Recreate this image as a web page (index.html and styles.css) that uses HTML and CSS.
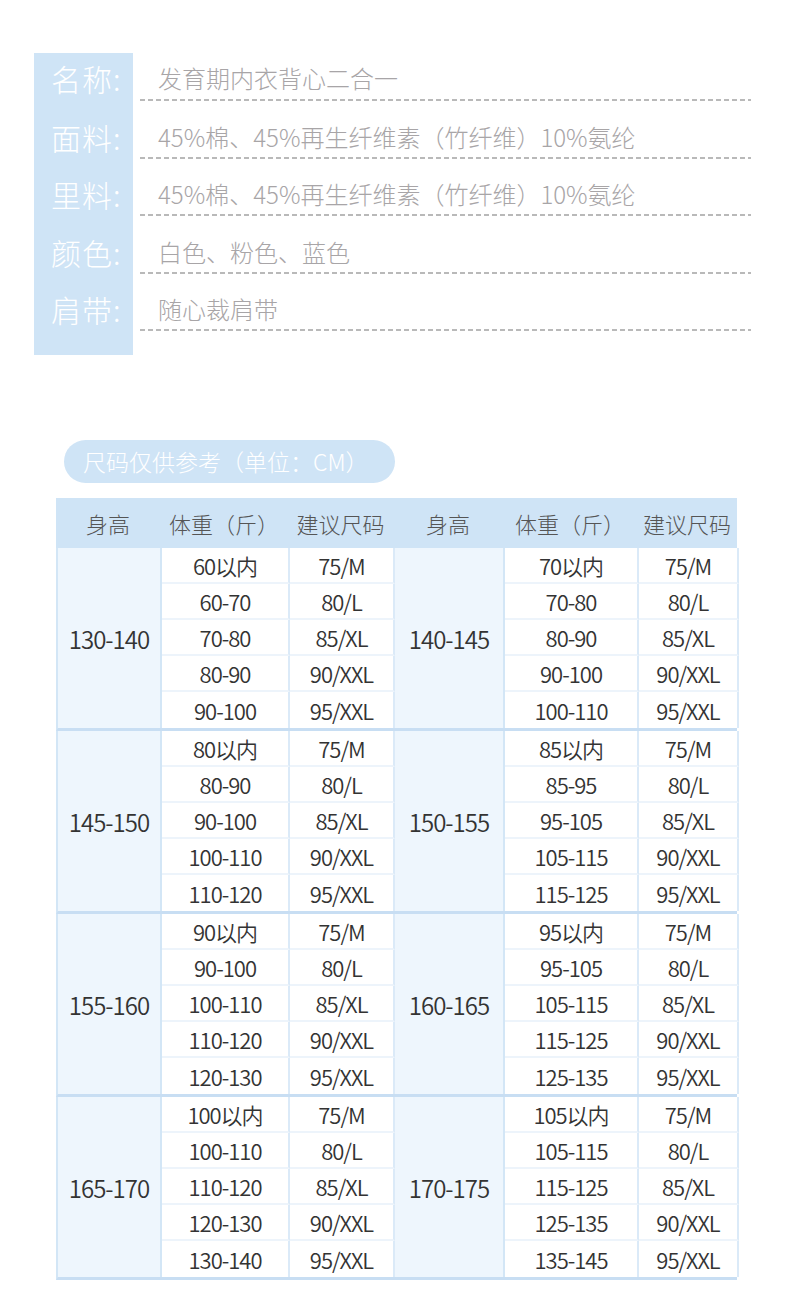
FILE: index.html
```html
<!DOCTYPE html>
<html lang="zh-CN">
<head>
<meta charset="utf-8">
<title>尺码表</title>
<link rel="stylesheet" href="styles.css">
</head>
<body>
<div class="page">
  <section class="spec">
    <div class="spec-labels">
      <div class="spec-row first">名称:</div>
      <div class="spec-row">面料:</div>
      <div class="spec-row">里料:</div>
      <div class="spec-row">颜色:</div>
      <div class="spec-row">肩带:</div>
    </div>
    <div class="spec-values">
      <div class="spec-row first line">发育期内衣背心二合一</div>
      <div class="spec-row line">45%棉、45%再生纤维素（竹纤维）10%氨纶</div>
      <div class="spec-row line">45%棉、45%再生纤维素（竹纤维）10%氨纶</div>
      <div class="spec-row line">白色、粉色、蓝色</div>
      <div class="spec-row line">随心裁肩带</div>
    </div>
  </section>

  <div class="pill">尺码仅供参考（单位：CM）</div>

  <section class="size-table">
    <div class="thead">
      <div>身高</div><div>体重（斤）</div><div>建议尺码</div>
      <div>身高</div><div>体重（斤）</div><div>建议尺码</div>
    </div>

    <div class="group">
      <div class="h h-left">130-140</div>
      <div class="h h-right">140-145</div>
      <div class="c">60以内</div><div class="c">75/M</div><div class="c">70以内</div><div class="c">75/M</div>
      <div class="c">60-70</div><div class="c">80/L</div><div class="c">70-80</div><div class="c">80/L</div>
      <div class="c">70-80</div><div class="c">85/XL</div><div class="c">80-90</div><div class="c">85/XL</div>
      <div class="c">80-90</div><div class="c">90/XXL</div><div class="c">90-100</div><div class="c">90/XXL</div>
      <div class="c">90-100</div><div class="c">95/XXL</div><div class="c">100-110</div><div class="c">95/XXL</div>
    </div>

    <div class="group">
      <div class="h h-left">145-150</div>
      <div class="h h-right">150-155</div>
      <div class="c">80以内</div><div class="c">75/M</div><div class="c">85以内</div><div class="c">75/M</div>
      <div class="c">80-90</div><div class="c">80/L</div><div class="c">85-95</div><div class="c">80/L</div>
      <div class="c">90-100</div><div class="c">85/XL</div><div class="c">95-105</div><div class="c">85/XL</div>
      <div class="c">100-110</div><div class="c">90/XXL</div><div class="c">105-115</div><div class="c">90/XXL</div>
      <div class="c">110-120</div><div class="c">95/XXL</div><div class="c">115-125</div><div class="c">95/XXL</div>
    </div>

    <div class="group">
      <div class="h h-left">155-160</div>
      <div class="h h-right">160-165</div>
      <div class="c">90以内</div><div class="c">75/M</div><div class="c">95以内</div><div class="c">75/M</div>
      <div class="c">90-100</div><div class="c">80/L</div><div class="c">95-105</div><div class="c">80/L</div>
      <div class="c">100-110</div><div class="c">85/XL</div><div class="c">105-115</div><div class="c">85/XL</div>
      <div class="c">110-120</div><div class="c">90/XXL</div><div class="c">115-125</div><div class="c">90/XXL</div>
      <div class="c">120-130</div><div class="c">95/XXL</div><div class="c">125-135</div><div class="c">95/XXL</div>
    </div>

    <div class="group">
      <div class="h h-left">165-170</div>
      <div class="h h-right">170-175</div>
      <div class="c">100以内</div><div class="c">75/M</div><div class="c">105以内</div><div class="c">75/M</div>
      <div class="c">100-110</div><div class="c">80/L</div><div class="c">105-115</div><div class="c">80/L</div>
      <div class="c">110-120</div><div class="c">85/XL</div><div class="c">115-125</div><div class="c">85/XL</div>
      <div class="c">120-130</div><div class="c">90/XXL</div><div class="c">125-135</div><div class="c">90/XXL</div>
      <div class="c">130-140</div><div class="c">95/XXL</div><div class="c">135-145</div><div class="c">95/XXL</div>
    </div>
  </section>
</div>
</body>
</html>
```

FILE: styles.css
```css
* { box-sizing: border-box; }

html, body {
  margin: 0;
  padding: 0;
  background: #ffffff;
}

body {
  font-family: "Noto Sans CJK SC", "Noto Sans", sans-serif;
  font-weight: 300;
  width: 790px;
}

.page {
  padding-top: 53px;
  padding-bottom: 30px;
}

/* ---------- spec block ---------- */
.spec {
  display: flex;
  margin-left: 34px;
}

.spec-labels {
  width: 99px;
  background: #cfe4f6;
  padding-bottom: 24px;
}

.spec-values {
  width: 611px;
  margin-left: 7px;
}

.spec-row {
  height: 57.5px;
  display: flex;
  align-items: flex-end;
  padding-bottom: 8px;
  line-height: 28px;
  white-space: nowrap;
}

.spec-row.first {
  height: 48px;
  padding-bottom: 9px;
}

.spec-labels .spec-row {
  font-size: 30px;
  color: #ffffff;
  padding-left: 17px;
  padding-bottom: 5px;
  line-height: 34px;
  letter-spacing: 1px;
}

.spec-labels .spec-row.first {
  padding-bottom: 6px;
}

.spec-values .spec-row {
  font-size: 24px;
  color: #a8a5a7;
  padding-left: 18px;
}

.line {
  background-image: linear-gradient(to right, #b9b9b9 5px, transparent 5px);
  background-size: 8px 2px;
  background-repeat: repeat-x;
  background-position: left bottom;
}

/* ---------- pill ---------- */
.pill {
  margin: 85px 0 0 64px;
  width: 331px;
  height: 43px;
  border-radius: 22px;
  background: #cfe4f6;
  color: #ffffff;
  font-size: 23px;
  line-height: 43px;
  padding-left: 19px;
  white-space: nowrap;
}

/* ---------- table ---------- */
.size-table {
  margin: 15px 0 0 56px;
  width: 681px;
}

.thead {
  display: grid;
  grid-template-columns: 104px 128px 105px 110px 134px 100px;
  height: 50px;
  background: #cfe4f6;
  color: #555555;
  font-size: 22px;
}

.thead div {
  display: flex;
  align-items: center;
  justify-content: center;
  white-space: nowrap;
}

.group {
  display: grid;
  grid-template-columns: 104px 128px 105px 110px 134px 100px;
  grid-template-rows: repeat(5, 36px);
  border-left: 2px solid #d3e6f6;
  border-bottom: 3px solid #c8def3;
  color: #333333;
  font-weight: 350;
}

.h {
  grid-row: 1 / 6;
  background: #eef6fd;
  border-right: 2px solid #d3e6f6;
  display: flex;
  align-items: center;
  justify-content: center;
  font-size: 24px;
  letter-spacing: -1px;
}

.h-left { grid-column: 1; }
.h-right { grid-column: 4; }

.c {
  display: flex;
  align-items: center;
  justify-content: center;
  font-size: 22px;
  letter-spacing: -1px;
  border-right: 2px solid #dbeaf8;
  border-bottom: 2px solid #edf4fb;
  background: #ffffff;
  white-space: nowrap;
}

.c:nth-last-child(-n+4) {
  border-bottom: none;
}
```
